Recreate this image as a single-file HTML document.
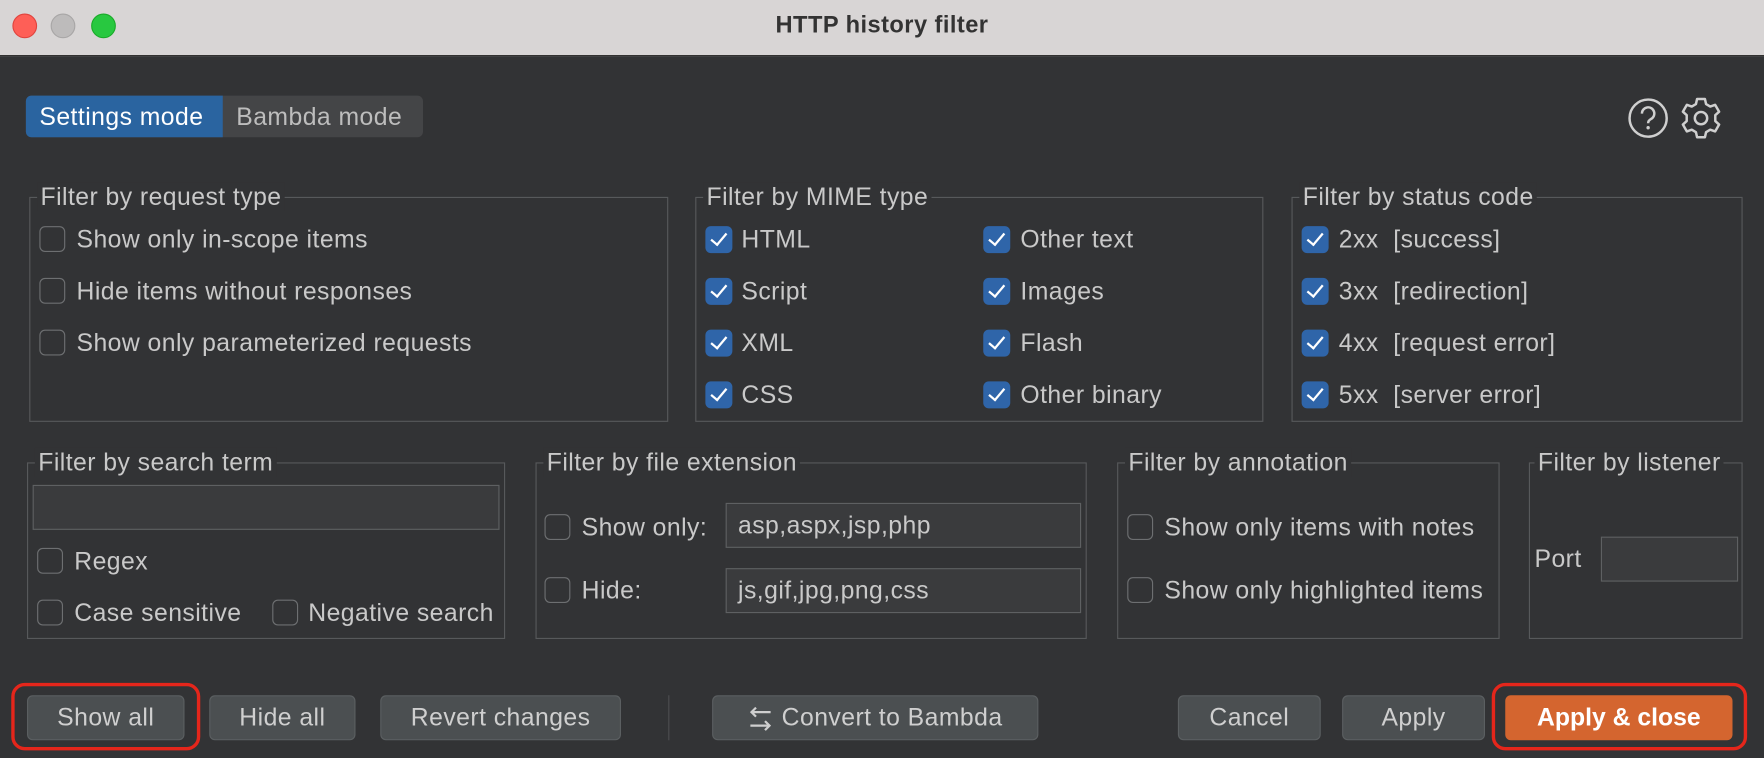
<!DOCTYPE html>
<html><head><meta charset="utf-8"><style>
html,body{margin:0;padding:0;width:1764px;height:758px;overflow:hidden;background:#323335;}
#w{position:absolute;left:0;top:0;width:1568px;height:674px;transform:scale(1.125);transform-origin:0 0;font-family:"Liberation Sans",sans-serif;color:#c9c9c9;font-size:22px;letter-spacing:0.4px;background:#323335;}
.a{position:absolute;white-space:nowrap;}
.tb{position:absolute;left:0;top:0;width:1568px;height:49px;background:#d8d5d5;border-bottom:1px solid #1a1a1a;}
.dot{position:absolute;width:22px;height:22px;border-radius:50%;top:12px;}
.g{position:absolute;border:1.5px solid #57595b;box-sizing:border-box;}
.lg{position:absolute;top:-14px;left:6px;background:#323335;padding:0 3px;line-height:26px;}
.cb{position:absolute;width:23px;height:23px;border:1.5px solid #6d6f71;border-radius:5px;box-sizing:border-box;}
.ck{position:absolute;width:24px;height:24px;background:#2f65a9;border-radius:5px;}
.ck:after{content:"";position:absolute;left:8px;top:3px;width:6px;height:12px;border:solid #fff;border-width:0 2.5px 2.5px 0;transform:rotate(40deg);}
.t{position:absolute;line-height:24px;white-space:nowrap;}
.in{position:absolute;border:1.5px solid #5e6062;background:#3a3b3d;box-sizing:border-box;line-height:38px;padding-left:10px;}
.bt{position:absolute;top:618px;height:40px;background:#4b4f51;border:1px solid #5b5f61;border-radius:5px;box-sizing:border-box;text-align:center;line-height:38px;color:#cfcfcf;}
.red{position:absolute;top:607px;height:60px;border:3px solid #e5261b;border-radius:12px;box-sizing:border-box;}
</style></head><body><div id="w">
<div class="tb"></div>
<div class="dot" style="left:11px;background:#fe5f57;border:1px solid #e0443e;box-sizing:border-box"></div>
<div class="dot" style="left:45px;background:#bdbbbb;border:1px solid #a8a6a6;box-sizing:border-box"></div>
<div class="dot" style="left:81px;background:#28c840;border:1px solid #1aab29;box-sizing:border-box"></div>
<div class="a" style="left:0;width:1568px;text-align:center;top:11px;font-weight:bold;color:#333;font-size:21px">HTTP history filter</div>

<div class="a" style="left:23px;top:85px;width:353px;height:37px;background:#444547;border-radius:5px"></div>
<div class="a" style="left:23px;top:85px;width:175px;height:37px;background:#2a64a0;border-radius:5px 0 0 5px"></div>
<div class="a" style="left:35px;top:91px;color:#fff">Settings mode</div>
<div class="a" style="left:210px;top:91px;color:#bdbdbd">Bambda mode</div>

<svg class="a" style="left:1446px;top:85px" width="90" height="40" viewBox="0 0 90 40">
<circle cx="19" cy="20" r="16.5" fill="none" stroke="#cfcfcf" stroke-width="2.2"/>
<path d="M13.5 16a5.5 5.5 0 1 1 8 4.8c-1.8 1-2.5 2-2.5 3.7" fill="none" stroke="#cfcfcf" stroke-width="2.2"/>
<circle cx="19" cy="28.5" r="1.5" fill="#cfcfcf"/>
<g transform="translate(66,20)" fill="none" stroke="#cfcfcf" stroke-width="2.2">
<path d="M-3.5 -17 L3.5 -17 L4.5 -12.5 L8.2 -10.3 L12.6 -11.8 L16.1 -5.7 L12.7 -2.6 L12.7 2.6 L16.1 5.7 L12.6 11.8 L8.2 10.3 L4.5 12.5 L3.5 17 L-3.5 17 L-4.5 12.5 L-8.2 10.3 L-12.6 11.8 L-16.1 5.7 L-12.7 2.6 L-12.7 -2.6 L-16.1 -5.7 L-12.6 -11.8 L-8.2 -10.3 L-4.5 -12.5 Z" stroke-linejoin="round"/>
<circle r="5.5"/></g></svg>

<div class="g" style="left:26px;top:175px;width:568px;height:200px"><div class="lg">Filter by request type</div></div>
<div class="cb" style="left:35px;top:201px"></div><div class="t" style="left:68px;top:201px">Show only in-scope items</div>
<div class="cb" style="left:35px;top:247px"></div><div class="t" style="left:68px;top:247px">Hide items without responses</div>
<div class="cb" style="left:35px;top:293px"></div><div class="t" style="left:68px;top:293px">Show only parameterized requests</div>

<div class="g" style="left:618px;top:175px;width:505px;height:200px"><div class="lg">Filter by MIME type</div></div>
<div class="ck" style="left:627px;top:201px"></div><div class="t" style="left:659px;top:201px">HTML</div>
<div class="ck" style="left:627px;top:247px"></div><div class="t" style="left:659px;top:247px">Script</div>
<div class="ck" style="left:627px;top:293px"></div><div class="t" style="left:659px;top:293px">XML</div>
<div class="ck" style="left:627px;top:339px"></div><div class="t" style="left:659px;top:339px">CSS</div>
<div class="ck" style="left:874px;top:201px"></div><div class="t" style="left:907px;top:201px">Other text</div>
<div class="ck" style="left:874px;top:247px"></div><div class="t" style="left:907px;top:247px">Images</div>
<div class="ck" style="left:874px;top:293px"></div><div class="t" style="left:907px;top:293px">Flash</div>
<div class="ck" style="left:874px;top:339px"></div><div class="t" style="left:907px;top:339px">Other binary</div>

<div class="g" style="left:1148px;top:175px;width:401px;height:200px"><div class="lg">Filter by status code</div></div>
<div class="ck" style="left:1157px;top:201px"></div><div class="t" style="left:1190px;top:201px">2xx&nbsp;&nbsp;[success]</div>
<div class="ck" style="left:1157px;top:247px"></div><div class="t" style="left:1190px;top:247px">3xx&nbsp;&nbsp;[redirection]</div>
<div class="ck" style="left:1157px;top:293px"></div><div class="t" style="left:1190px;top:293px">4xx&nbsp;&nbsp;[request error]</div>
<div class="ck" style="left:1157px;top:339px"></div><div class="t" style="left:1190px;top:339px">5xx&nbsp;&nbsp;[server error]</div>

<div class="g" style="left:24px;top:411px;width:425px;height:157px"><div class="lg">Filter by search term</div></div>
<div class="in" style="left:29px;top:431px;width:415px;height:40px"></div>
<div class="cb" style="left:33px;top:487px"></div><div class="t" style="left:66px;top:487px">Regex</div>
<div class="cb" style="left:33px;top:533px"></div><div class="t" style="left:66px;top:533px">Case sensitive</div>
<div class="cb" style="left:242px;top:533px"></div><div class="t" style="left:274px;top:533px">Negative search</div>

<div class="g" style="left:476px;top:411px;width:490px;height:157px"><div class="lg">Filter by file extension</div></div>
<div class="cb" style="left:484px;top:457px"></div><div class="t" style="left:517px;top:457px">Show only:</div>
<div class="in" style="left:645px;top:447px;width:316px;height:40px">asp,aspx,jsp,php</div>
<div class="cb" style="left:484px;top:513px"></div><div class="t" style="left:517px;top:513px">Hide:</div>
<div class="in" style="left:645px;top:505px;width:316px;height:40px">js,gif,jpg,png,css</div>

<div class="g" style="left:993px;top:411px;width:340px;height:157px"><div class="lg">Filter by annotation</div></div>
<div class="cb" style="left:1002px;top:457px"></div><div class="t" style="left:1035px;top:457px">Show only items with notes</div>
<div class="cb" style="left:1002px;top:513px"></div><div class="t" style="left:1035px;top:513px">Show only highlighted items</div>

<div class="g" style="left:1359px;top:411px;width:190px;height:157px"><div class="lg" style="left:4px">Filter by listener</div></div>
<div class="t" style="left:1364px;top:485px">Port</div>
<div class="in" style="left:1423px;top:477px;width:122px;height:40px"></div>

<div class="bt" style="left:24px;width:140px">Show all</div>
<div class="bt" style="left:186px;width:130px">Hide all</div>
<div class="bt" style="left:338px;width:214px">Revert changes</div>
<div class="a" style="left:594px;top:618px;width:1px;height:40px;background:#4c4e50"></div>
<div class="bt" style="left:633px;width:290px"><span style="display:inline-block;vertical-align:middle;margin-right:8px;line-height:0"><svg width="22" height="24" viewBox="0 0 22 24" fill="none" stroke="#cfcfcf" stroke-width="2"><path d="M20 6H3M7 2L3 6L7 10M2 18H19M15 14L19 18L15 22"/></svg></span>Convert to Bambda</div>
<div class="bt" style="left:1047px;width:127px">Cancel</div>
<div class="bt" style="left:1193px;width:127px">Apply</div>
<div class="bt" style="left:1338px;width:202px;background:#d4652f;border-color:#d4652f;color:#fff;font-weight:bold;letter-spacing:0">Apply &amp; close</div>
<div class="red" style="left:10px;width:168px"></div>
<div class="red" style="left:1326px;width:227px"></div>
</div></body></html>
